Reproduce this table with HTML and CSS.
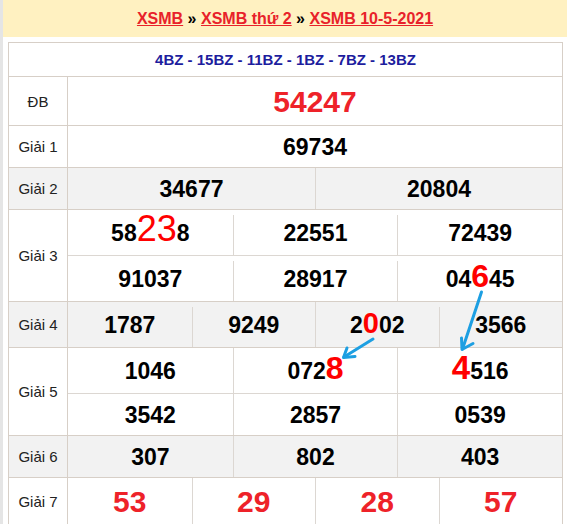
FILE: index.html
```html
<!DOCTYPE html>
<html lang="vi">
<head>
<meta charset="utf-8">
<title>XSMB 10-5-2021</title>
<link rel="stylesheet" href="styles.css">
</head>
<body>
<div class="page">
  <div class="crumbs"><a href="#">XSMB</a> » <a href="#">XSMB thứ 2</a> » <a href="#">XSMB 10-5-2021</a></div>
  <div class="board">
    <div class="codes">4BZ - 15BZ - 11BZ - 1BZ - 7BZ - 13BZ</div>

    <div class="prize">
      <div class="label">ĐB</div>
      <div class="nums">
        <div class="line c1 h48"><div class="cell"><span class="n red big">54247</span></div></div>
      </div>
    </div>

    <div class="prize">
      <div class="label">Giải 1</div>
      <div class="nums">
        <div class="line c1 h41"><div class="cell"><span class="n">69734</span></div></div>
      </div>
    </div>

    <div class="prize alt">
      <div class="label">Giải 2</div>
      <div class="nums">
        <div class="line c2 h41">
          <div class="cell"><span class="n">34677</span></div>
          <div class="cell"><span class="n">20804</span></div>
        </div>
      </div>
    </div>

    <div class="prize">
      <div class="label">Giải 3</div>
      <div class="nums">
        <div class="line c3 h45">
          <div class="cell"><span class="n">58<span class="hl thin s36">23</span>8</span></div>
          <div class="cell gap"><span class="n">22551</span></div>
          <div class="cell gap"><span class="n">72439</span></div>
        </div>
        <div class="line c3 h45">
          <div class="cell"><span class="n">91037</span></div>
          <div class="cell gap"><span class="n">28917</span></div>
          <div class="cell gap"><span class="n">04<span class="hl s32">6</span>45</span></div>
        </div>
      </div>
    </div>

    <div class="prize alt">
      <div class="label">Giải 4</div>
      <div class="nums">
        <div class="line c4 h45">
          <div class="cell"><span class="n">1787</span></div>
          <div class="cell gap"><span class="n">9249</span></div>
          <div class="cell"><span class="n">2<span class="hl s29">0</span>02</span></div>
          <div class="cell gap"><span class="n">3566</span></div>
        </div>
      </div>
    </div>

    <div class="prize">
      <div class="label">Giải 5</div>
      <div class="nums">
        <div class="line c3 h45">
          <div class="cell"><span class="n">1046</span></div>
          <div class="cell"><span class="n">072<span class="hl s32">8</span></span></div>
          <div class="cell"><span class="n"><span class="hl s33">4</span>516</span></div>
        </div>
        <div class="line c3 h41">
          <div class="cell"><span class="n">3542</span></div>
          <div class="cell"><span class="n">2857</span></div>
          <div class="cell"><span class="n">0539</span></div>
        </div>
      </div>
    </div>

    <div class="prize alt">
      <div class="label">Giải 6</div>
      <div class="nums">
        <div class="line c3 h41">
          <div class="cell"><span class="n">307</span></div>
          <div class="cell"><span class="n">802</span></div>
          <div class="cell"><span class="n">403</span></div>
        </div>
      </div>
    </div>

    <div class="prize">
      <div class="label">Giải 7</div>
      <div class="nums">
        <div class="line c4 h46">
          <div class="cell"><span class="n red big">53</span></div>
          <div class="cell"><span class="n red big">29</span></div>
          <div class="cell"><span class="n red big">28</span></div>
          <div class="cell"><span class="n red big">57</span></div>
        </div>
      </div>
    </div>
  </div>
</div>
<svg class="arrows" width="567" height="524" viewBox="0 0 567 524" aria-hidden="true">
  <g fill="none" stroke="#1d9fe2" stroke-width="3" stroke-linecap="round" stroke-linejoin="round">
    <path d="M373 339 L344 357"/>
    <path d="M347 348 L343.5 357.5 L355 356.5"/>
    <path d="M481.5 292 L462.5 349"/>
    <path d="M461.5 338 L462 349.5 L473 343.5"/>
  </g>
</svg>
</body>
</html>
```

FILE: styles.css
```css
html, body {
  margin: 0;
  padding: 0;
}

body {
  background: #e5e5e5;
  font-family: "Liberation Sans", Arial, sans-serif;
  position: relative;
  min-height: 524px;
}

.page {
  margin-left: 3px;
  background: #ffffff;
  min-height: 524px;
  padding-bottom: 10px;
}

.crumbs {
  height: 37px;
  line-height: 37px;
  background: #fff1c1;
  text-align: center;
  font-size: 16px;
  font-weight: bold;
  color: #000;
}

.crumbs a {
  color: #e8222a;
  text-decoration: underline;
}

.board {
  margin: 5px 4px 0 5px;
  border: 1px solid #d7cfc7;
}

.codes {
  height: 33px;
  display: flex;
  align-items: center;
  justify-content: center;
  color: #1d1d9e;
  font-weight: bold;
  font-size: 15px;
}

.prize {
  display: grid;
  grid-template-columns: 59px 1fr;
  border-top: 1px solid #d7cfc7;
}

.prize.alt {
  background: #f2f2f2;
}

.label {
  border-right: 1px solid #d7cfc7;
  display: flex;
  align-items: center;
  justify-content: center;
  font-size: 15px;
  color: #222;
}

.line {
  display: grid;
}

.line + .line {
  border-top: 1px solid #dcd7d2;
}

.c1 { grid-template-columns: 1fr; }
.c2 { grid-template-columns: 1fr 1fr; }
.c3 { grid-template-columns: 1fr 1fr 1fr; }
.c4 { grid-template-columns: 1fr 1fr 1fr 1fr; }

.h41 { height: 41px; }
.h45 { height: 45px; }
.h46 { height: 46px; }
.h48 { height: 48px; }

.cell {
  display: flex;
  align-items: center;
  justify-content: center;
  min-width: 0;
  padding-top: 1px;
}

.cell + .cell {
  border-left: 1px solid #dcd7d2;
}

.cell + .cell.gap {
  border-left: 0;
  padding-left: 1px;
  background: linear-gradient(#dcd7d2, #dcd7d2) 0 5px / 1px 100% no-repeat;
}

.n {
  font-weight: bold;
  font-size: 23px;
  color: #000;
  line-height: 1;
  white-space: nowrap;
}

.n.red {
  color: #ee2229;
}

.n.big {
  font-size: 30px;
}

.hl {
  color: #ff0000;
  font-weight: bold;
  line-height: 0;
}

.hl.thin {
  font-weight: normal;
}

.s29 { font-size: 29px; }
.s32 { font-size: 32px; }
.s33 { font-size: 33px; }
.s36 { font-size: 36px; }

.arrows {
  position: absolute;
  left: 0;
  top: 0;
  pointer-events: none;
}
```
